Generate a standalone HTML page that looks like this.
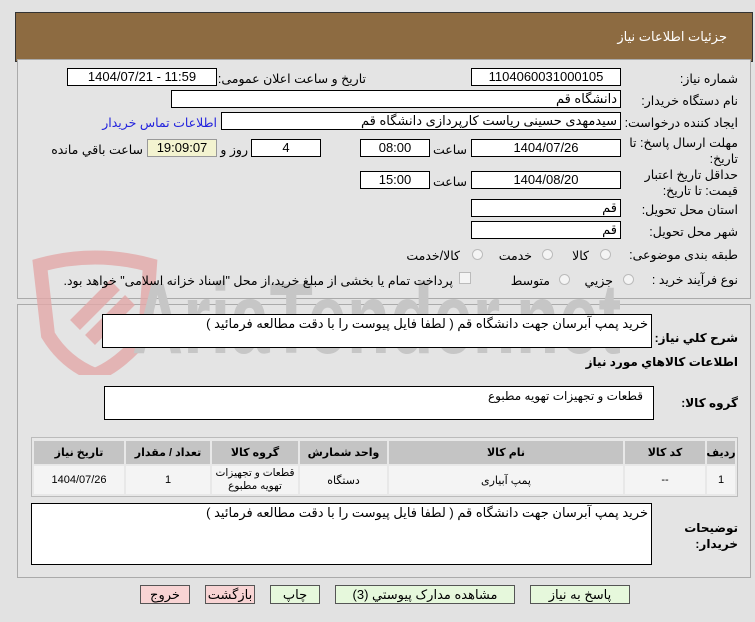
<!DOCTYPE html>
<html><head><meta charset="utf-8"><style>
body{margin:0;width:755px;height:622px;background:#e2e2e2;font-family:"Liberation Sans","DejaVu Sans",sans-serif;font-size:12px;color:#000;position:relative;overflow:hidden}
.a{position:absolute;white-space:nowrap}
.r{direction:rtl}
.box{position:absolute;background:#fff;border:1px solid #000;box-sizing:border-box;height:18px;line-height:16px;text-align:center;font-size:13px;overflow:hidden}
.lbl{position:absolute;direction:rtl;text-align:right;white-space:nowrap;font-size:12.5px}
.rad{position:absolute;width:11px;height:11px;border-radius:50%;border:1px solid #bbb;background:#f4f4f4;box-sizing:border-box}
.btn{position:absolute;top:585px;height:19px;border:1px solid #555;box-sizing:border-box;text-align:center;line-height:17px;font-size:13px}
.c{position:absolute;text-align:center;font-size:11px;display:flex;align-items:center;justify-content:center;direction:rtl;overflow:hidden}
.h{top:441px;height:23px;background:#c4c4c4;font-weight:bold}
.d{top:466px;height:28px;background:#f4f4f4}
</style></head><body>
<div class="a" style="left:15px;top:12px;width:738px;height:50px;background:#8d6b41;border:1px solid #333;box-sizing:border-box"></div>
<div class="lbl" style="right:28px;top:29px;color:#fff;font-size:13px">جزئیات اطلاعات نیاز</div>

<div class="a" style="left:17px;top:59px;width:734px;height:240px;border:1px solid #aaa;background:#e4e4e4;box-sizing:border-box"></div>
<div class="a" style="left:17px;top:304px;width:734px;height:274px;border:1px solid #aaa;background:#e4e4e4;box-sizing:border-box"></div>

<svg class="a" style="left:20px;top:245px" width="600" height="130">
<path d="M20 20 Q75 5 130 20 L125 90 Q100 120 75 130 Q45 118 28 90 Z" fill="none" stroke="#e2a8a8" stroke-width="14" opacity="0.8"/>
<path d="M55 80 L95 40 M70 95 L110 55" stroke="#e2a8a8" stroke-width="14" opacity="0.8"/>
<text x="112" y="108" font-family="Liberation Sans" font-weight="bold" font-size="100" fill="#c6c6c6" textLength="490" lengthAdjust="spacingAndGlyphs">AriaTender.net</text>
</svg>

<div class="lbl" style="right:17px;top:71px">شماره نیاز:</div>
<div class="box" style="left:471px;top:68px;width:150px">1104060031000105</div>
<div class="lbl" style="right:389px;top:71px">تاریخ و ساعت اعلان عمومی:</div>
<div class="box" style="left:67px;top:68px;width:150px">1404/07/21 - 11:59</div>

<div class="lbl" style="right:17px;top:93px">نام دستگاه خریدار:</div>
<div class="box r" style="left:171px;top:90px;width:450px;text-align:right;padding-right:3px">دانشگاه قم</div>

<div class="lbl" style="right:17px;top:115px">ایجاد کننده درخواست:</div>
<div class="box r" style="left:221px;top:112px;width:400px;text-align:right;padding-right:3px">سیدمهدی حسینی ریاست کارپردازی دانشگاه قم</div>
<div class="lbl" style="right:538px;top:115px;color:#2222dd">اطلاعات تماس خریدار</div>

<div class="lbl" style="right:17px;top:135px;line-height:16px">مهلت ارسال پاسخ: تا<br>تاریخ:</div>
<div class="box" style="left:471px;top:139px;width:150px">1404/07/26</div>
<div class="lbl" style="right:288px;top:142px">ساعت</div>
<div class="box" style="left:360px;top:139px;width:70px">08:00</div>
<div class="box" style="left:251px;top:139px;width:70px">4</div>
<div class="lbl" style="right:507px;top:142px">روز و</div>
<div class="box" style="left:147px;top:139px;width:70px;background:#f3f3d0;border-color:#999">19:09:07</div>
<div class="lbl" style="right:612px;top:142px">ساعت باقي مانده</div>

<div class="lbl" style="right:17px;top:167px;line-height:16px">حداقل تاریخ اعتبار<br>قیمت: تا تاریخ:</div>
<div class="box" style="left:471px;top:171px;width:150px">1404/08/20</div>
<div class="lbl" style="right:288px;top:174px">ساعت</div>
<div class="box" style="left:360px;top:171px;width:70px">15:00</div>

<div class="lbl" style="right:17px;top:202px">استان محل تحویل:</div>
<div class="box r" style="left:471px;top:199px;width:150px;text-align:right;padding-right:3px">قم</div>
<div class="lbl" style="right:17px;top:224px">شهر محل تحویل:</div>
<div class="box r" style="left:471px;top:221px;width:150px;text-align:right;padding-right:3px">قم</div>

<div class="lbl" style="right:17px;top:247px">طبقه بندی موضوعی:</div>
<div class="rad" style="left:600px;top:249px"></div><div class="lbl" style="right:166px;top:248px">کالا</div>
<div class="rad" style="left:542px;top:249px"></div><div class="lbl" style="right:223px;top:248px">خدمت</div>
<div class="rad" style="left:472px;top:249px"></div><div class="lbl" style="right:295px;top:248px">کالا/خدمت</div>

<div class="lbl" style="right:17px;top:272px">نوع فرآیند خرید :</div>
<div class="rad" style="left:623px;top:274px"></div><div class="lbl" style="right:142px;top:273px">جزیي</div>
<div class="rad" style="left:559px;top:274px"></div><div class="lbl" style="right:205px;top:273px">متوسط</div>
<div class="a" style="left:459px;top:272px;width:12px;height:12px;border:1px solid #bbb;background:#f4f4f4;box-sizing:border-box"></div>
<div class="lbl" style="right:302px;top:273px">پرداخت تمام یا بخشی از مبلغ خرید،از محل "اسناد خزانه اسلامی" خواهد بود.</div>

<div class="lbl" style="right:17px;top:331px;font-weight:bold;font-size:12px">شرح كلي نياز:</div>
<div class="box r" style="left:102px;top:314px;width:550px;height:34px;text-align:right;padding-right:3px;line-height:18px">خرید پمپ آبرسان جهت دانشگاه قم ( لطفا فایل پیوست را با دقت مطالعه فرمائید )</div>
<div class="lbl" style="right:17px;top:355px;font-weight:bold;font-size:12px">اطلاعات كالاهاي مورد نياز</div>

<div class="lbl" style="right:17px;top:396px;font-weight:bold;font-size:12px">گروه کالا:</div>
<div class="box r" style="left:104px;top:386px;width:550px;height:34px;text-align:right;padding-right:10px;line-height:18px;font-size:12px">قطعات و تجهیزات تهویه مطبوع</div>

<div class="a" style="left:31px;top:437px;width:707px;height:60px;border:1px solid #bbb;box-sizing:border-box;background:#e8e8e8"></div>
<div class="c h" style="left:707px;width:28px">ردیف</div>
<div class="c h" style="left:625px;width:80px">کد کالا</div>
<div class="c h" style="left:389px;width:234px">نام کالا</div>
<div class="c h" style="left:300px;width:87px">واحد شمارش</div>
<div class="c h" style="left:212px;width:86px">گروه کالا</div>
<div class="c h" style="left:126px;width:84px">تعداد / مقدار</div>
<div class="c h" style="left:34px;width:90px">تاریخ نیاز</div>
<div class="c d" style="left:707px;width:28px">1</div>
<div class="c d" style="left:625px;width:80px">--</div>
<div class="c d" style="left:389px;width:234px">پمپ آبیاری</div>
<div class="c d" style="left:300px;width:87px">دستگاه</div>
<div class="c d" style="left:212px;width:86px;line-height:13px;font-size:10.5px">قطعات و تجهیزات<br>تهویه مطبوع</div>
<div class="c d" style="left:126px;width:84px">1</div>
<div class="c d" style="left:34px;width:90px">1404/07/26</div>

<div class="lbl" style="right:17px;top:520px;font-weight:bold;line-height:16px;font-size:12px">توضیحات<br>خریدار:</div>
<div class="box r" style="left:31px;top:503px;width:621px;height:62px;text-align:right;padding-right:3px;line-height:18px">خرید پمپ آبرسان جهت دانشگاه قم ( لطفا فایل پیوست را با دقت مطالعه فرمائید )</div>

<div class="btn" style="left:530px;width:100px;background:#e6f8dc">پاسخ به نیاز</div>
<div class="btn" style="left:335px;width:180px;background:#e6f8dc">مشاهده مدارک پیوستي (3)</div>
<div class="btn" style="left:270px;width:50px;background:#e6f8dc">چاپ</div>
<div class="btn" style="left:205px;width:50px;background:#f8d4d4">بازگشت</div>
<div class="btn" style="left:140px;width:50px;background:#f8d4d4">خروج</div>
</body></html>
